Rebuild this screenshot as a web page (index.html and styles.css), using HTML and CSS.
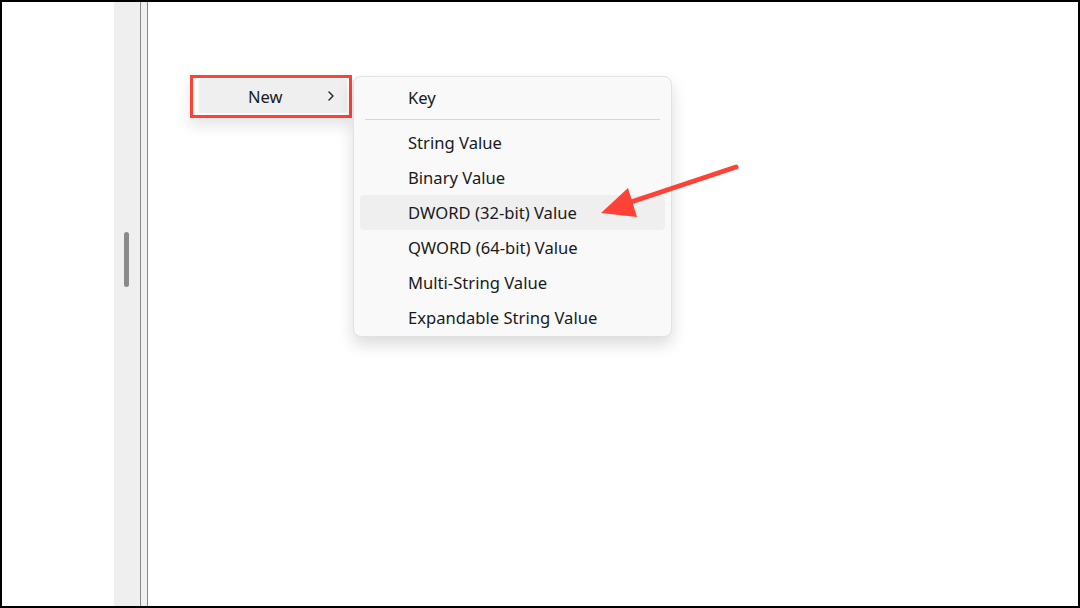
FILE: index.html
```html
<!DOCTYPE html>
<html lang="en">
<head>
  <meta charset="UTF-8">
  <title>Registry Editor - New menu</title>
  <link rel="stylesheet" href="styles.css">
</head>
<body>

  <div class="frame">
    <div class="left-blank"></div>
    <div class="tree-scroll">
      <div class="thumb"></div>
    </div>
    <div class="splitter"></div>

    <div class="values-pane">
      <div class="parent-menu">
        <div class="parent-item">
          <span class="parent-label">New</span>
          <svg class="chevron" width="8" height="12" viewBox="0 0 8 12">
            <path d="M2 2l4 4-4 4" fill="none" stroke="#222" stroke-width="1.4" stroke-linecap="round" stroke-linejoin="round"/>
          </svg>
        </div>
      </div>

      <div class="submenu">
        <div class="menu-item">Key</div>
        <div class="separator"></div>
        <div class="menu-item">String Value</div>
        <div class="menu-item">Binary Value</div>
        <div class="menu-item hover">DWORD (32-bit) Value</div>
        <div class="menu-item">QWORD (64-bit) Value</div>
        <div class="menu-item">Multi-String Value</div>
        <div class="menu-item">Expandable String Value</div>
      </div>
    </div>

    <!-- annotation arrow -->
    <svg class="annotation" width="1080" height="608" viewBox="0 0 1080 608">
      <line x1="736" y1="167" x2="622" y2="205" stroke="#ff4136" stroke-width="5" stroke-linecap="round"/>
      <polygon points="601,213 628,188 637,217" fill="#ff4136"/>
    </svg>
  </div>

</body>
</html>
```

FILE: styles.css
```css
body {
  margin: 0;
  font-family: "Noto Sans", "Open Sans", sans-serif;
  background: #fff;
}

.frame {
  position: relative;
  display: flex;
  width: 1080px;
  height: 608px;
  box-sizing: border-box;
  border: 2px solid #000;
  background: #fff;
  overflow: hidden;
}

.left-blank {
  width: 112px;
  background: #fff;
}

.tree-scroll {
  width: 26px;
  background: #efefef;
  display: flex;
  justify-content: center;
  padding-top: 230px;
  box-sizing: border-box;
}

.thumb {
  width: 5px;
  height: 55px;
  margin-left: -2px;
  border-radius: 3px;
  background: #8a8a8a;
}

.splitter {
  width: 6px;
  background: #f0f0f0;
  border-left: 1px solid #8a8a8a;
  border-right: 1px solid #8a8a8a;
}

.values-pane {
  position: relative;
  flex: 1;
  background: #fff;
}

.parent-menu {
  position: absolute;
  left: 42px;
  top: 73px;
  width: 148px;
  height: 34px;
  border: 3px solid #ff4136;
  background: #fbfbfb;
  padding: 1px 2px 2px 6px;
  box-shadow: 0 8px 14px rgba(0, 0, 0, 0.10);
}

.parent-item {
  height: 34px;
  background: #efefef;
  border-radius: 4px;
  display: flex;
  align-items: center;
  padding-left: 49px;
  padding-right: 12px;
  font-size: 16.5px;
  color: #1a1a1a;
}

.parent-label {
  flex: 1;
}

.chevron {
  display: block;
}

.submenu {
  position: absolute;
  left: 205px;
  top: 74px;
  width: 317px;
  padding: 3px 0 1px;
  background: #f9f9f9;
  border: 1px solid #e2e2e2;
  border-radius: 8px;
  box-shadow: 0 8px 16px rgba(0, 0, 0, 0.14);
}

.menu-item {
  height: 35px;
  margin: 0 6px;
  padding-left: 48px;
  display: flex;
  align-items: center;
  border-radius: 4px;
  font-size: 16.6px;
  color: #1a1a1a;
}

.menu-item.hover {
  background: #efefef;
}

.separator {
  height: 1px;
  margin: 4px 11px 5px;
  background: #d6d6d6;
}

.annotation {
  position: absolute;
  left: -2px;
  top: -2px;
  pointer-events: none;
}
```
